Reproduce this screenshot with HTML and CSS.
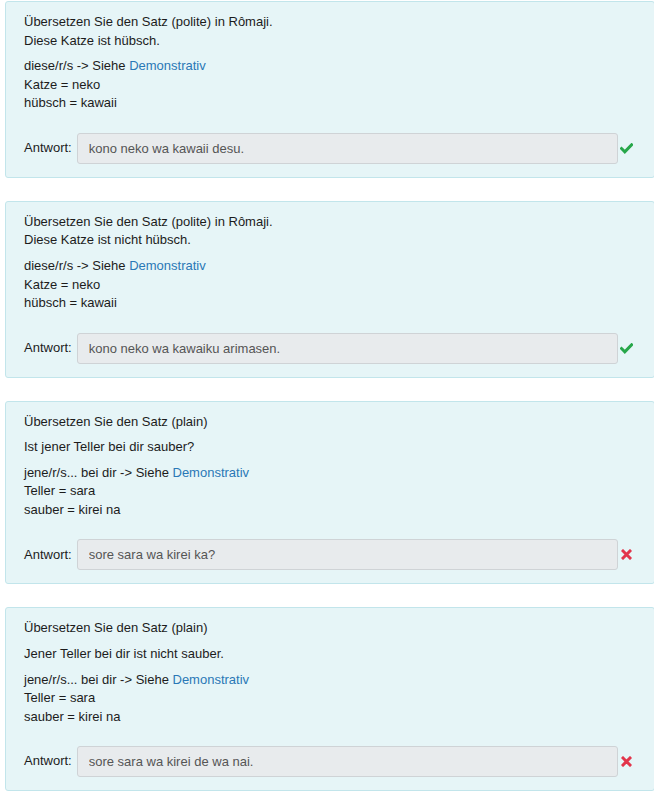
FILE: index.html
```html
<!DOCTYPE html>
<html lang="de">
<head>
<meta charset="utf-8">
<title>Übungen</title>
<link rel="stylesheet" href="styles.css">
</head>
<body>
<main class="exercises">

  <section class="task">
    <p class="task-text">Übersetzen Sie den Satz (polite) in Rômaji.<br>Diese Katze ist hübsch.</p>
    <p class="task-text">diese/r/s -&gt; Siehe <a href="#" class="ref">Demonstrativ</a><br>Katze = neko<br>hübsch = kawaii</p>
    <div class="answer">
      <span class="answer-label">Antwort:</span>
      <input class="answer-input" type="text" value="kono neko wa kawaii desu." disabled>
      <span class="result">
        <svg class="icon-ok" width="13" height="11" viewBox="0 0 13 11"><polyline points="1.5,5.5 4.8,8.8 11.6,1.8" fill="none" stroke="#27a74a" stroke-width="3" stroke-linecap="square"/></svg>
      </span>
    </div>
  </section>

  <section class="task">
    <p class="task-text">Übersetzen Sie den Satz (polite) in Rômaji.<br>Diese Katze ist nicht hübsch.</p>
    <p class="task-text">diese/r/s -&gt; Siehe <a href="#" class="ref">Demonstrativ</a><br>Katze = neko<br>hübsch = kawaii</p>
    <div class="answer">
      <span class="answer-label">Antwort:</span>
      <input class="answer-input" type="text" value="kono neko wa kawaiku arimasen." disabled>
      <span class="result">
        <svg class="icon-ok" width="13" height="11" viewBox="0 0 13 11"><polyline points="1.5,5.5 4.8,8.8 11.6,1.8" fill="none" stroke="#27a74a" stroke-width="3" stroke-linecap="square"/></svg>
      </span>
    </div>
  </section>

  <section class="task">
    <p class="task-text">Übersetzen Sie den Satz (plain)</p>
    <p class="task-text">Ist jener Teller bei dir sauber?</p>
    <p class="task-text">jene/r/s... bei dir -&gt; Siehe <a href="#" class="ref">Demonstrativ</a><br>Teller = sara<br>sauber = kirei na</p>
    <div class="answer">
      <span class="answer-label">Antwort:</span>
      <input class="answer-input" type="text" value="sore sara wa kirei ka?" disabled>
      <span class="result">
        <svg class="icon-wrong" width="11" height="11" viewBox="0 0 11 11"><path d="M2 2 L9 9 M9 2 L2 9" fill="none" stroke="#e2354b" stroke-width="3" stroke-linecap="square"/></svg>
      </span>
    </div>
  </section>

  <section class="task">
    <p class="task-text">Übersetzen Sie den Satz (plain)</p>
    <p class="task-text">Jener Teller bei dir ist nicht sauber.</p>
    <p class="task-text">jene/r/s... bei dir -&gt; Siehe <a href="#" class="ref">Demonstrativ</a><br>Teller = sara<br>sauber = kirei na</p>
    <div class="answer">
      <span class="answer-label">Antwort:</span>
      <input class="answer-input" type="text" value="sore sara wa kirei de wa nai." disabled>
      <span class="result">
        <svg class="icon-wrong" width="11" height="11" viewBox="0 0 11 11"><path d="M2 2 L9 9 M9 2 L2 9" fill="none" stroke="#e2354b" stroke-width="3" stroke-linecap="square"/></svg>
      </span>
    </div>
  </section>

</main>
</body>
</html>
```
FILE: styles.css
```css
html {
  overflow: hidden;
}

body {
  margin: 0;
  background: #ffffff;
  font-family: "Liberation Sans", Arial, sans-serif;
  font-size: 13px;
  line-height: 1.428571;
  color: #1c1c1c;
}

.exercises {
  display: flex;
  flex-direction: column;
  gap: 23px;
  padding: 1px 0 0 5px;
  width: 650px;
}

.task {
  box-sizing: border-box;
  width: 650px;
  padding: 11px 18px 13px 18px;
  background: #e6f5f7;
  border: 1px solid #c2e5eb;
  border-radius: 3px;
}

.task-text {
  margin: 0 0 7px 0;
}

.task-text:last-of-type {
  margin-bottom: 0;
}

.ref {
  color: #2a78b6;
  text-decoration: none;
}

.answer {
  display: flex;
  align-items: center;
  margin-top: 20px;
}

.answer-label {
  margin-right: 5px;
}

.answer-input {
  flex: 1;
  min-width: 0;
  box-sizing: border-box;
  height: 31px;
  margin: 0;
  padding: 0 11px;
  font-family: "Liberation Sans", Arial, sans-serif;
  font-size: 13px;
  color: #555555;
  background: #e8ebed;
  border: 1px solid #cfd3d6;
  border-radius: 3px;
  opacity: 1;
}

.result {
  width: 16px;
  margin-left: 2px;
  display: flex;
  align-items: center;
}

.icon-wrong {
  margin-left: 1px;
}
```
